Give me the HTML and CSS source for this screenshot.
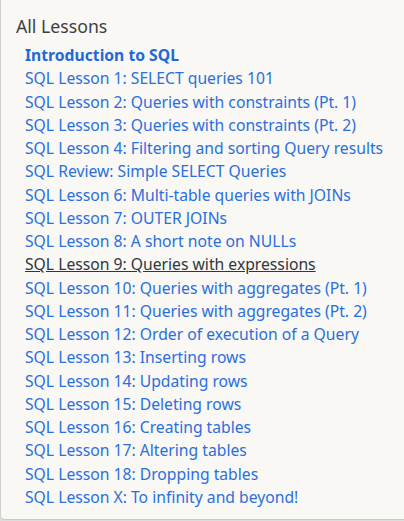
FILE: index.html
```html
<!DOCTYPE html>
<html>
<head>
<meta charset="utf-8">
<link rel="stylesheet" href="styles.css">
</head>
<body>
<div class="page">
  <div class="menu">
    <div class="menu-title">All Lessons</div>
    <ul class="lesson-list">
      <li><a class="lesson intro" href="#">Introduction to SQL</a></li>
      <li><a class="lesson" href="#">SQL Lesson 1: SELECT queries 101</a></li>
      <li><a class="lesson" href="#">SQL Lesson 2: Queries with constraints (Pt. 1)</a></li>
      <li><a class="lesson" href="#">SQL Lesson 3: Queries with constraints (Pt. 2)</a></li>
      <li><a class="lesson" href="#">SQL Lesson 4: Filtering and sorting Query results</a></li>
      <li><a class="lesson" href="#">SQL Review: Simple SELECT Queries</a></li>
      <li><a class="lesson" href="#">SQL Lesson 6: Multi-table queries with JOINs</a></li>
      <li><a class="lesson" href="#">SQL Lesson 7: OUTER JOINs</a></li>
      <li><a class="lesson" href="#">SQL Lesson 8: A short note on NULLs</a></li>
      <li><a class="lesson current" href="#">SQL Lesson 9: Queries with expressions</a></li>
      <li><a class="lesson" href="#">SQL Lesson 10: Queries with aggregates (Pt. 1)</a></li>
      <li><a class="lesson" href="#">SQL Lesson 11: Queries with aggregates (Pt. 2)</a></li>
      <li><a class="lesson" href="#">SQL Lesson 12: Order of execution of a Query</a></li>
      <li><a class="lesson" href="#">SQL Lesson 13: Inserting rows</a></li>
      <li><a class="lesson" href="#">SQL Lesson 14: Updating rows</a></li>
      <li><a class="lesson" href="#">SQL Lesson 15: Deleting rows</a></li>
      <li><a class="lesson" href="#">SQL Lesson 16: Creating tables</a></li>
      <li><a class="lesson" href="#">SQL Lesson 17: Altering tables</a></li>
      <li><a class="lesson" href="#">SQL Lesson 18: Dropping tables</a></li>
      <li><a class="lesson" href="#">SQL Lesson X: To infinity and beyond!</a></li>
    </ul>
  </div>
</div>
</body>
</html>
```
FILE: styles.css
```css
html, body {
  margin: 0;
  padding: 0;
}
body {
  background: #dcdcdc;
  font-family: "Noto Sans", "Open Sans", sans-serif;
  width: 404px;
  height: 521px;
  overflow: hidden;
}
.page {
  width: 404px;
  height: 521px;
}
.menu {
  box-sizing: border-box;
  width: 404px;
  height: 520px;
  background: #f9f8f5;
  border-left: 1px solid #cfcfcf;
  border-bottom: 1px solid #c8c8c8;
  border-bottom-left-radius: 5px;
  padding: 14px 0 0 15px;
}
.menu-title {
  font-size: 17.7px;
  line-height: 24px;
  color: #3f3f3f;
  margin-bottom: 6px;
}
.lesson-list {
  list-style: none;
  margin: 0;
  padding: 0 0 0 9px;
}
.lesson-list li {
  line-height: 23.25px;
  font-size: 15.7px;
}
.lesson {
  color: #2a6fdc;
  text-decoration: none;
}
.lesson.intro {
  font-weight: 700;
  color: #1f69d6;
}
.lesson.current {
  color: #2f3640;
  text-decoration: underline;
}
```
